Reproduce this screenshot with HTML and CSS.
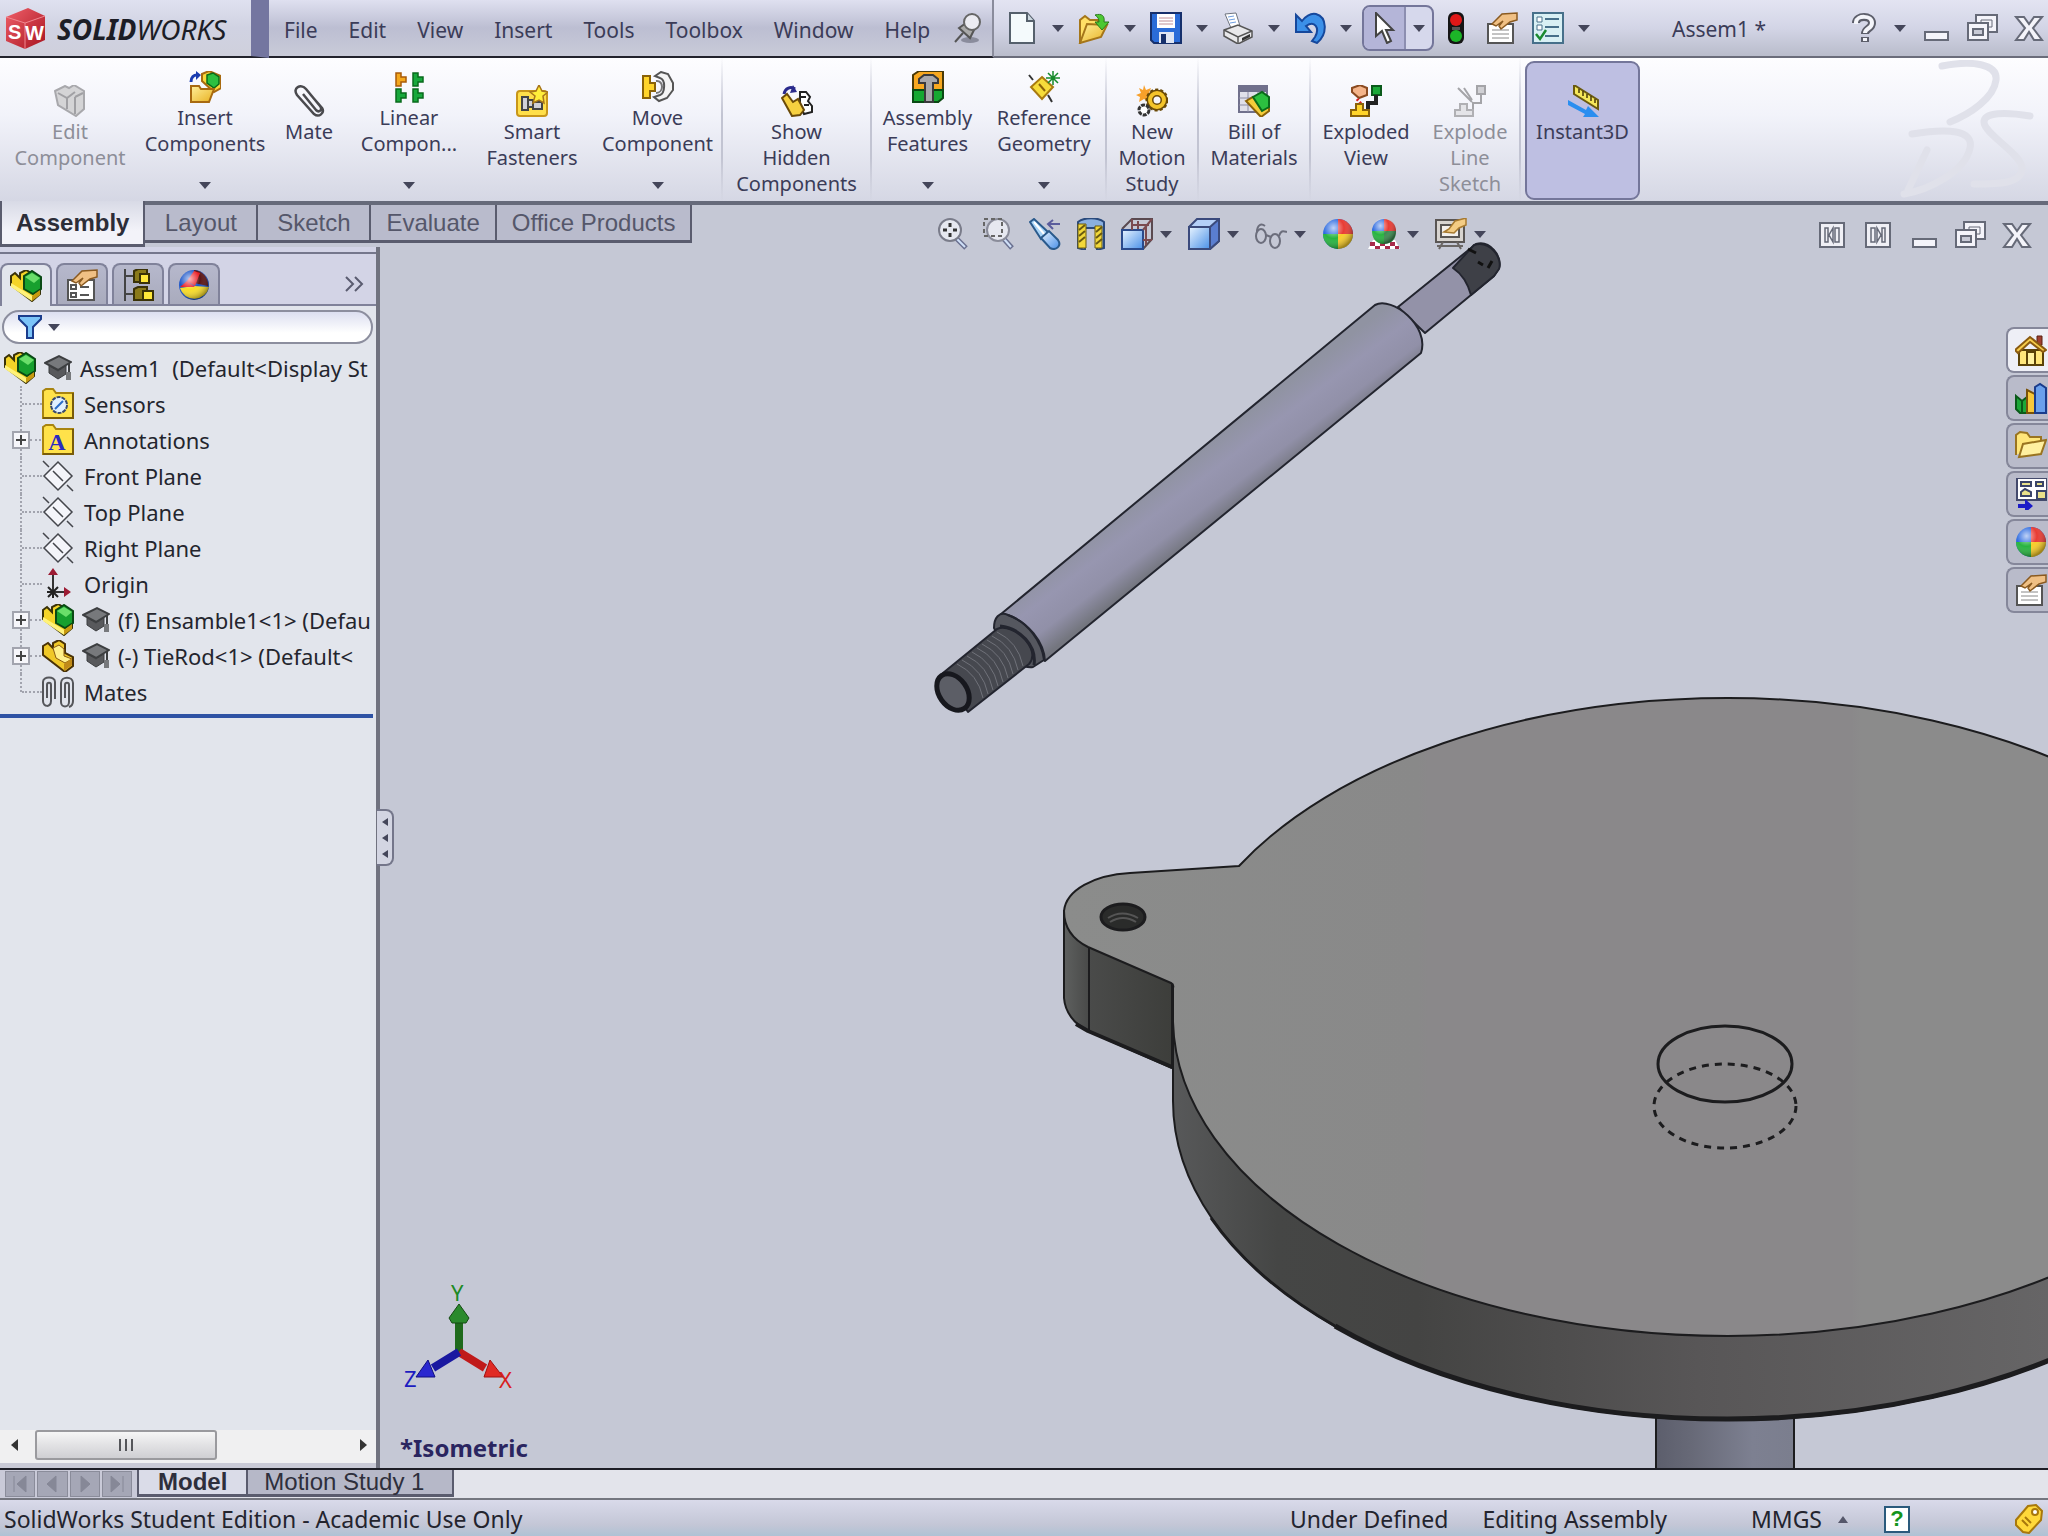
FILE: index.html
```html
<!DOCTYPE html>
<html lang="en">
<head>
  <meta charset="UTF-8" />
  <meta name="viewport" content="width=device-width, initial-scale=1.0" />
  <title>SolidWorks - Assem1</title>
  <link rel="stylesheet" href="styles.css">
</head>
<body>
  <!-- icon set, 32x32 grid -->
  <svg class="sprite" aria-hidden="true">
    <defs>
      <linearGradient id="g-blue" x1="0" y1="0" x2="1" y2="1"><stop offset="0" stop-color="#e8f4ff"/><stop offset="1" stop-color="#4a90e8"/></linearGradient>
      <linearGradient id="g-yellow" x1="0" y1="0" x2="1" y2="1"><stop offset="0" stop-color="#fff09a"/><stop offset="1" stop-color="#e8b020"/></linearGradient>
      <linearGradient id="g-red" x1="0" y1="0" x2="1" y2="1"><stop offset="0" stop-color="#f0606a"/><stop offset="1" stop-color="#a81420"/></linearGradient>
      <radialGradient id="g-shine" cx=".35" cy=".3" r=".7"><stop offset="0" stop-color="#fff" stop-opacity=".7"/><stop offset=".5" stop-color="#fff" stop-opacity="0"/><stop offset="1" stop-color="#000" stop-opacity=".35"/></radialGradient>

      <symbol id="i-caret" viewBox="0 0 12 8"><path d="M0 1h12L6 8z" fill="#44465a"/></symbol>
      <symbol id="i-new" viewBox="0 0 32 32"><path d="M4 1h17l7 8v22H4z" fill="#f4fafc" stroke="#55606c" stroke-width="2"/><path d="M21 1v8h7" fill="#ccd8e0" stroke="#55606c" stroke-width="2"/></symbol>
      <symbol id="i-open" viewBox="0 0 32 32"><path d="M2 31V8l5-4 5 4h8v6z" fill="#ffe066" stroke="#a5761a" stroke-width="2"/><path d="M2 31L9 12l20 1-6 12z" fill="url(#g-yellow)" stroke="#a5761a" stroke-width="2"/><path d="M17 3c7-2 10 1 9 7h5l-7 8-7-8h4c0-3-1-5-4-7z" fill="#4cc832" stroke="#2a7a1c"/></symbol>
      <symbol id="i-save" viewBox="0 0 32 32"><path d="M1 1h30v30H4l-3-3z" fill="#2a6cd8" stroke="#16306c" stroke-width="2"/><path d="M7 2h18v14H7z" fill="#fff"/><path d="M9 6h14M9 9h14M9 12h14" stroke="#c09098" stroke-width="1"/><path d="M9 20h15v11H9z" fill="#dfe6f4"/><path d="M11 22h5v9h-5z" fill="#16306c"/></symbol>
      <symbol id="i-print" viewBox="0 0 32 32"><path d="M3 2l11-1 4 13-9 2z" fill="#fff" stroke="#6e7480"/><path d="M6 5l6-1M7 8l6-1M8 11l6-1" stroke="#6f9fe0"/><path d="M2 18l14-5 14 6v6l-14 7-14-8z" fill="#e8e8ea" stroke="#555" stroke-width="1.500"/><path d="M2 18l14 7 14-6M16 25v7" fill="none" stroke="#555" stroke-width="1.500"/><path d="M20 26l8-4v3l-8 4z" fill="#333"/></symbol>
      <symbol id="i-undo" viewBox="0 0 32 32"><path d="M2 3v17h15l-5-6c9-6 14 2 9 11l-3 4 5 2C34 22 33 5 22 2c-5-1-10 2-14 7z" fill="#3c90e8" stroke="#16489c" stroke-width="2"/></symbol>
      <symbol id="i-arrow" viewBox="0 0 32 32"><path d="M8 1v23l6-5 5 12 4-2-5-11h7z" fill="#fff" stroke="#444" stroke-width="2"/></symbol>
      <symbol id="i-traffic" viewBox="0 0 32 32"><rect x="8" y="0" width="16" height="32" rx="6" fill="#151515"/><circle cx="16" cy="8" r="6" fill="#e01818"/><path d="M12 15h8v3h-8z" fill="#555"/><circle cx="16" cy="24" r="6" fill="#1cb428"/></symbol>
      <symbol id="i-props" viewBox="0 0 32 32"><path d="M2 12h25v19H2z" fill="#fff" stroke="#555" stroke-width="2"/><path d="M6 18h17M6 22h17M6 26h17" stroke="#888"/><path d="M6 12L16 2l15-1v7l-7 2-9 7-2-3 4-5-7 5z" fill="#f0c084" stroke="#8a5a20" stroke-width="1.500"/></symbol>
      <symbol id="i-proptree" viewBox="0 0 32 32"><path d="M2 11h26v20H2z" fill="#fff" stroke="#555" stroke-width="2"/><path d="M5 16h5v4H5zM5 24h5v4H5z" fill="none" stroke="#555" stroke-width="2"/><path d="M14 18h9M14 26h9" stroke="#555" stroke-width="2"/><path d="M6 12L16 2l15-1v7l-7 2-9 7-2-3 4-5-7 5z" fill="#f0c084" stroke="#8a5a20" stroke-width="1.500"/></symbol>
      <symbol id="i-options" viewBox="0 0 32 32"><rect x="1" y="1" width="30" height="30" fill="#d8f0f4" stroke="#46708a" stroke-width="2"/><path d="M5 5h5v5H5zM5 13h5v5H5z" fill="#fff" stroke="#46708a"/><path d="M13 7h14M13 15h14M13 24h14" stroke="#46708a" stroke-width="2"/><path d="M4 22l4 5 6-9" fill="none" stroke="#1a8a30" stroke-width="2.500"/></symbol>
      <symbol id="i-help" viewBox="0 0 32 32"><path d="M8 11C8 3 24 3 24 11c0 6-7 5-7 11M17 25v5" fill="none" stroke="#5c5e6a" stroke-width="8"/><path d="M8 12v-2C9 3 24 3 24 11c0 6-7 5-7 10M17 26v3" fill="none" stroke="#f4f5fa" stroke-width="4"/></symbol>
      <symbol id="i-min" viewBox="0 0 32 32"><rect x="5" y="20" width="23" height="8" fill="#f4f4fa" stroke="#666a78" stroke-width="2"/></symbol>
      <symbol id="i-restore" viewBox="0 0 32 32"><path d="M10 3h21v17H10z" fill="#f4f4fa" stroke="#666a78" stroke-width="2"/><path d="M15 8h11v7H15z" fill="none" stroke="#666a78"/><path d="M2 11h20v17H2z" fill="#f4f4fa" stroke="#666a78" stroke-width="2"/><path d="M7 17h10v6H7z" fill="#c8cad6" stroke="#666a78" stroke-width="2"/></symbol>
      <symbol id="i-close" viewBox="0 0 32 32"><path d="M4 5h8l5 7 5-7h8l-9 11 9 12h-8l-5-8-5 8H4l9-12z" fill="#f4f4fa" stroke="#666a78" stroke-width="2"/></symbol>
      <symbol id="i-pin" viewBox="0 0 32 32"><ellipse cx="18" cy="28" rx="9" ry="3" fill="#8a8c9c"/><path d="M3 30l8-9" stroke="#555" stroke-width="2"/><path d="M7 16l11 10 4-8-8-7z" fill="#aaa" stroke="#555" stroke-width="2"/><circle cx="20" cy="10" r="8" fill="#ececf2" stroke="#666" stroke-width="2"/></symbol>

      <symbol id="i-asm" viewBox="0 0 32 32"><path d="M1 6l4-3 5 5V3l6-3 14 8v16l-8 7L1 15z" fill="#f4d428" stroke="#3a3208" stroke-width="2"/><path d="M14 6l8-5 9 6v12l-8 5-9-5z" fill="#17a02e" stroke="#0a4a14" stroke-width="2"/><path d="M15 7l7-4 8 5-6 5z" fill="#6ade6a"/><path d="M1 13l21 13v5L1 17z" fill="#fff27a"/><path d="M22 26l8-6v5l-8 6z" fill="#c89a10"/></symbol>
      <symbol id="i-part" viewBox="0 0 32 32"><path d="M1 6l5-3 5 5V3l6-3 6 4v9l8 4v9l-8 6L1 15z" fill="#f0c828" stroke="#4a3206" stroke-width="2"/><path d="M11 8l6-3 5 4v7l8 3-7 4-9-5z" fill="#fff08a" stroke="#8a5a10"/><path d="M22 24l8-6v7l-8 6z" fill="#c08a18"/></symbol>
      <symbol id="i-grey-asm" viewBox="0 0 32 32"><path d="M1 6l10-5 4 2 5-3 10 6v18l-8 7L4 20z" fill="#d4d4d6" stroke="#a8a8ac" stroke-width="2"/><path d="M4 8l9 5 8-6M13 13v11M21 12l8-4M21 12v17" fill="none" stroke="#a0a0a4" stroke-width="2"/></symbol>
      <symbol id="i-insert" viewBox="0 0 32 32"><path d="M2 11C2 6 5 4 8 4" fill="none" stroke="#1a3cb0" stroke-width="3"/><path d="M7 0l5 4-5 5z" fill="#1a3cb0"/><path d="M13 3l7-3 12 5v12l-7 4-12-11z" fill="#f8d83a" stroke="#a86a10" stroke-width="2"/><path d="M18 4l6-2 6 4v7l-5 4-7-5z" fill="#2cc040" stroke="#0a6a1a" stroke-width="1.500"/><path d="M2 31V15h8l2 3h13l-5 13z" fill="url(#g-yellow)" stroke="#a86a10" stroke-width="2"/></symbol>
      <symbol id="i-clip" viewBox="0 0 32 32"><path d="M10 9l13 16c3 3 7 0 4-4L13 4C8-2-1 3 4 10l17 19c5 4 11-1 8-6L17 9" fill="none" stroke="#4a4a4e" stroke-width="2.500"/></symbol>
      <symbol id="i-linear" viewBox="0 0 32 32"><path d="M3 2h5v4h5v5H8v4H3z" fill="#f4a81c" stroke="#a85a08" stroke-width="1.500"/><path d="M20 2h5v4h5v5h-5v4h-5zM20 18h5v4h5v5h-5v4h-5zM3 18h5v4h5v5H8v4H3z" fill="#18a83c" stroke="#086a1c" stroke-width="1.500"/></symbol>
      <symbol id="i-smart" viewBox="0 0 32 32"><rect x="1" y="6" width="30" height="25" rx="3" fill="#ffdf4a" stroke="#c8961a" stroke-width="2"/><path d="M6 12h6v13H6zM12 15h5v7h-5zM17 17h9v7h-9z" fill="#d0d0d8" stroke="#444" stroke-width="2"/><path d="M23 0l3 6 6 1-5 4 1 7-5-3-6 3 2-7-5-4 6-1z" fill="#ffee3a" stroke="#a8761a" stroke-width="1.500"/></symbol>
      <symbol id="i-move" viewBox="0 0 32 32"><path d="M1 5h7v7h5v8H8v7H1z" fill="#ffd42a" stroke="#8a6208" stroke-width="2"/><path d="M13 5l6-4 7 2 5 9v7l-6 8-8 3-5-4 6-2c5-2 6-15 0-17z" fill="#f4f4f4" stroke="#555" stroke-width="2"/><path d="M14 10c8-1 8 12 0 12" fill="none" stroke="#777" stroke-width="2"/></symbol>
      <symbol id="i-show" viewBox="0 0 32 32"><path d="M3 9c1-6 7-8 11-5" fill="none" stroke="#2a2a8c" stroke-width="3"/><path d="M12 0l4 7-7 1z" fill="#2a2a8c"/><path d="M19 7h6l4 5-2 4 4 5v6l-8 2-4-8z" fill="#fff" stroke="#222" stroke-width="2"/><path d="M20 12h5M23 20h5" stroke="#222" stroke-width="2"/><path d="M1 13l5-4 6 8 5-3 6 11-4 5-8 1z" fill="#f6d040" stroke="#6a4a08" stroke-width="2"/></symbol>
      <symbol id="i-feat" viewBox="0 0 32 32"><path d="M1 4l6-4h24v26l-5 5H1z" fill="#f8a820" stroke="#4a3a08" stroke-width="2"/><path d="M1 19h30v8l-5 4H1z" fill="#16a832" stroke="#0a4a14" stroke-width="2"/><path d="M7 8l5-4h9l5 4v4h-5v19h-8V12H7z" fill="#a8a8ac" stroke="#3a3a3c" stroke-width="2"/></symbol>
      <symbol id="i-ref" viewBox="0 0 32 32"><path d="M1 4l4 5M20 24l4 7" stroke="#333" stroke-width="2"/><path d="M14 6l11 10-11 12L3 16z" fill="#f6dc3a" stroke="#a87a10" stroke-width="2"/><path d="M11 13l6 7" stroke="#8a6208" stroke-width="2"/><path d="M25 0v14M18 7h14M20 2l10 10M30 2L20 12" stroke="#158a2a" stroke-width="1.500"/></symbol>
      <symbol id="i-motion" viewBox="0 0 32 32"><path d="M8 0l2 5 5-2-2 5 4 2-5 2 1 5-5-3-5 3 1-5-4-2 5-2-2-5 4 2z" fill="#f8a02a"/><circle cx="21" cy="15" r="10" fill="none" stroke="#6a4a08" stroke-width="3" stroke-dasharray="3 2"/><circle cx="21" cy="15" r="7" fill="none" stroke="#6a4a08" stroke-width="7"/><circle cx="21" cy="15" r="7" fill="none" stroke="#f4c42a" stroke-width="4"/><circle cx="8" cy="25" r="5" fill="#fff" stroke="#333" stroke-width="3" stroke-dasharray="4 1"/></symbol>
      <symbol id="i-bom" viewBox="0 0 32 32"><path d="M1 1h28v26H1z" fill="#e0e0ea" stroke="#70708c" stroke-width="2"/><path d="M1 1h28v6H1z" fill="#70708c"/><path d="M1 13h28M1 20h28M10 7v20M20 7v20" stroke="#8c8ca4"/><path d="M8 16l7-4 16 8v6l-8 6z" fill="#f4cc3a" stroke="#8a6208" stroke-width="2"/><path d="M15 12l9-5 7 5v10l-7 4z" fill="#2cc040" stroke="#0a6a1a" stroke-width="2"/></symbol>
      <symbol id="i-exploded" viewBox="0 0 32 32"><path d="M2 3l8-3 7 3v7l-8 3-7-6z" fill="#f4b48a" stroke="#8a4a20" stroke-width="2"/><path d="M22 1h9v9h-9z" fill="#1ca838" stroke="#0a5a1a" stroke-width="2"/><path d="M26 10v8h-8v6" fill="none" stroke="#222" stroke-width="4"/><path d="M7 14l5 6" stroke="#d82020" stroke-width="3" stroke-dasharray="2 2"/><path d="M6 19h7v6h6v6H1v-6h5z" fill="#ffd42a" stroke="#8a6208" stroke-width="2"/></symbol>
      <symbol id="i-exploded-grey" viewBox="0 0 32 32"><path d="M23 1h8v8h-8z" fill="#d0d0d4" stroke="#a4a4a8" stroke-width="2"/><path d="M27 9v9h-8v6M4 3l14 14M10 3l8 12" fill="none" stroke="#a4a4a8" stroke-width="2"/><path d="M6 19h7v6h6v6H1v-6h5z" fill="#e4e4e8" stroke="#b0b0b4" stroke-width="2"/></symbol>
      <symbol id="i-instant" viewBox="0 0 32 32"><path d="M7 0l24 15v9L7 9z" fill="#f6e85a" stroke="#6a5a10" stroke-width="2"/><path d="M12 4v4M16 6v5M20 9v4M24 11v5M28 14v4" stroke="#4a3a08" stroke-width="1.500"/><path d="M1 15l18 10 2-4 11 11-16 0 2-3L1 20z" fill="#2a8ef0"/></symbol>

      <symbol id="i-zoomfit" viewBox="0 0 32 32"><path d="M19 20l10 10" stroke="#6a7090" stroke-width="5"/><path d="M20 21l8 8" stroke="#cfe0f8" stroke-width="2"/><circle cx="13" cy="12" r="11" fill="#e6e8f0" stroke="#7a7c8a" stroke-width="2"/><path d="M13 5v4M13 15v4M6 12h4M16 12h4" stroke="#333" stroke-width="3"/></symbol>
      <symbol id="i-zoomarea" viewBox="0 0 32 32"><path d="M20 20l9 10" stroke="#6a7090" stroke-width="5"/><path d="M21 21l7 8" stroke="#cfe0f8" stroke-width="2"/><circle cx="15" cy="12" r="11" fill="#e6e8f0" stroke="#8a8c9a" stroke-width="2"/><path d="M1 1h18v17H1z" fill="none" stroke="#666" stroke-width="2" stroke-dasharray="4 3"/></symbol>
      <symbol id="i-prev" viewBox="0 0 32 32"><path d="M1 4l4-3 14 13-7 7z" fill="#a8d4f8" stroke="#2a5a8c" stroke-width="2"/><path d="M5 4l11 13" stroke="#fff" stroke-width="2"/><path d="M12 20l8-7 9 9c4 6-2 11-8 8z" fill="url(#g-blue)" stroke="#2a5a8c" stroke-width="2"/><path d="M31 6H20M24 2l-5 4 5 5" fill="none" stroke="#5a5c9c" stroke-width="2"/></symbol>
      <symbol id="i-section" viewBox="0 0 32 32"><path d="M3 4c6-5 20-5 26 0v26l-7 2V10H10v22l-7-2z" fill="#8ab0e0" stroke="#2a4a7c" stroke-width="2"/><path d="M3 6h8v24H3zM20 8h7v22h-7z" fill="#f2d83a" stroke="#6a5a10"/><path d="M4 12l6-5M4 18l6-5M4 24l6-5M21 14l6-5M21 20l6-5M21 26l6-5" stroke="#6a5a10" stroke-width="2"/></symbol>
      <symbol id="i-orient" viewBox="0 0 32 32"><path d="M1 11L11 1h20v20l-9 10" fill="none" stroke="#5a4a50" stroke-width="2"/><path d="M1 12h21v19H1z" fill="url(#g-blue)" stroke="#2a4a8c" stroke-width="2"/><path d="M22 12l9-11M11 1v11M22 22h9M17 3v8M25 9v18M12 7h16" stroke="#7a4a50" stroke-width="2"/></symbol>
      <symbol id="i-cube" viewBox="0 0 32 32"><path d="M1 9l8-8h22v22l-9 8H1z" fill="#b4d0f8" stroke="#3a4a7c" stroke-width="2"/><path d="M22 9l9-8v22l-9 8z" fill="#5a7ed0" stroke="#3a4a7c" stroke-width="2"/><path d="M1 9h21v22H1z" fill="url(#g-blue)" stroke="#3a4a7c" stroke-width="2"/></symbol>
      <symbol id="i-glasses" viewBox="0 0 32 32"><g fill="none" stroke="#6c6e7c" stroke-width="2"><ellipse cx="6" cy="18" rx="5" ry="7"/><ellipse cx="20" cy="23" rx="5" ry="7"/><path d="M2 14C2 7 6 5 10 8M11 17l5 2M24 18c2-6 4-5 8-4"/></g></symbol>
      <symbol id="i-sphere" viewBox="0 0 32 32"><circle cx="16" cy="16" r="15" fill="#2c6ae0"/><path d="M16 16V1a15 15 0 0 1 15 15z" fill="#e83c34"/><path d="M16 16h15a15 15 0 0 1-15 15z" fill="#f8cc28"/><path d="M16 16v15A15 15 0 0 1 1 16z" fill="#28b440"/><circle cx="16" cy="16" r="15" fill="url(#g-shine)"/></symbol>
      <symbol id="i-sphere2" viewBox="0 0 32 32"><circle cx="16" cy="16" r="15" fill="#1a54c8"/><path d="M16 14L16 1a15 15 0 0 1 14 16z" fill="#5a1414"/><path d="M16 2l6 2-5 13-8-5z" fill="#e81c24"/><path d="M2 19l14-2 15 1a15 15 0 0 1-29 1z" fill="#f8dc28"/><path d="M2 18l7-6 8 6z" fill="#e81c24"/><circle cx="16" cy="16" r="15" fill="url(#g-shine)"/></symbol>
      <symbol id="i-scene" viewBox="0 0 32 32"><path d="M0 31l5-9h22l5 9z" fill="#fff"/><path d="M2 24h5v4H2zM12 24h5v4h-5zM22 24h5v4h-5zM7 28h5v3H7zM17 28h5v3h-5zM27 28h4v3h-4z" fill="#a82a4a"/><path d="M16 13V1a12 12 0 0 1 12 12z" fill="#e83c34"/><path d="M16 13V1A12 12 0 0 0 4 13z" fill="#2c6ae0"/><path d="M4 13h12v13C8 26 4 20 4 13z" fill="#28b440"/><path d="M16 13h12c0 8-4 13-12 13z" fill="#3c8c50"/><ellipse cx="16" cy="13" rx="12" ry="13" fill="url(#g-shine)"/></symbol>
      <symbol id="i-monitor" viewBox="0 0 32 32"><path d="M1 2h28v22H1z" fill="#d8d4d0" stroke="#5a5654" stroke-width="2"/><path d="M6 7h18v12H6z" fill="#f4f0ec" stroke="#5a5654" stroke-width="2"/><path d="M8 24l-4 7M22 24l4 7M2 28h26" stroke="#6a6664" stroke-width="2"/><path d="M9 14l5-3 6-8 11-3v7l-7 3-5 5z" fill="#f4cc84" stroke="#a87a30" stroke-width="1.500"/></symbol>
      <symbol id="i-paneL" viewBox="0 0 32 32"><rect x="4" y="4" width="24" height="24" fill="#f0f0f6" stroke="#666a78" stroke-width="2"/><path d="M9 9h3v14H9zM19 9h4v14h-4zM17 9v14l-4-7z" fill="#f0f0f6" stroke="#666a78" stroke-width="1.500"/></symbol>
      <symbol id="i-paneR" viewBox="0 0 32 32"><rect x="4" y="4" width="24" height="24" fill="#f0f0f6" stroke="#666a78" stroke-width="2"/><path d="M9 9h4v14H9zM20 9h3v14h-3zM15 9v14l4-7z" fill="#f0f0f6" stroke="#666a78" stroke-width="1.500"/></symbol>

      <symbol id="i-config" viewBox="0 0 32 32"><path d="M3 0v32M3 7h12M3 25h12" stroke="#444" stroke-width="2"/><path d="M12 2l4-2h9v10l-4 3h-9zM12 20l4-2h9v10l-4 3h-9z" fill="#8a7a1a" stroke="#3a3208" stroke-width="2"/><path d="M18 5h9v9h-9zM21 22h10v9H21z" fill="#ffe83a" stroke="#3a3208" stroke-width="2"/></symbol>
      <symbol id="i-cap" viewBox="0 0 28 28"><path d="M1 9L15 2l12 6-13 8z" fill="#77797c" stroke="#3c3e40" stroke-width="2"/><path d="M5 12v7l9 6 8-5v-8l-8 5z" fill="#58595c" stroke="#3c3e40"/><path d="M25 9v14" stroke="#3c3e40" stroke-width="2"/><path d="M22 18h5v8h-5z" fill="#77797c"/></symbol>
      <symbol id="i-sensor" viewBox="0 0 32 32"><path d="M1 30V3l3-2h7l3 4h17v25z" fill="#ffe24a" stroke="#a88410" stroke-width="2"/><path d="M1 30h30V5" fill="none" stroke="#7a5c08" stroke-width="2"/><circle cx="17" cy="17" r="8" fill="#e0f0ff" stroke="#3a4a6c" stroke-width="2" stroke-dasharray="4 1"/><path d="M13 21l8-8" stroke="#2a6cc8" stroke-width="2"/></symbol>
      <symbol id="i-annot" viewBox="0 0 32 32"><path d="M1 30V3l3-2h7l3 4h17v25z" fill="#ffe24a" stroke="#a88410" stroke-width="2"/><path d="M1 30h30V5" fill="none" stroke="#7a5c08" stroke-width="2"/><text x="15" y="26" class="glyph-a">A</text></symbol>
      <symbol id="i-plane" viewBox="0 0 32 32"><path d="M16 2l14 14-14 14L2 16z" fill="#f4f5fa" stroke="#44464c" stroke-width="1.500"/><path d="M1 1l6 6M11 11l10 10M25 25l6 6" stroke="#44464c" stroke-width="1.500"/></symbol>
      <symbol id="i-origin" viewBox="0 0 32 32"><path d="M11 7v17h14" fill="none" stroke="#333" stroke-width="2"/><path d="M11 0l5 7H6zM29 24l-7-5v10z" fill="#9c1c34"/><path d="M6 19l10 10M16 19L6 29M5 24h6M11 24v6" stroke="#222" stroke-width="2"/></symbol>
      <symbol id="i-mates" viewBox="0 0 32 32"><g fill="none" stroke="#55565a" stroke-width="2"><path d="M5 22V9c0-3 4-3 4 0v16c0 7-8 6-8 0V6c0-6 12-6 12 0v17"/><path d="M23 22V9c0-3 4-3 4 0v17c0 6-8 6-8 0V7c0-7 12-7 12 0v18c0 3-1 5-4 6"/></g></symbol>
      <symbol id="i-filter" viewBox="0 0 24 24"><path d="M1 1h22v3l-8 8v11H9V12L1 4z" fill="#7cc4f8" stroke="#1a3c8c" stroke-width="2"/></symbol>
      <symbol id="i-home" viewBox="0 0 32 32"><path d="M22 2h5v9h-5z" fill="#a04030" stroke="#5a2010"/><path d="M4 16h24v15H4z" fill="#ffe67a" stroke="#5a4208" stroke-width="2"/><path d="M0 16L15 3l16 13-3 2L15 8 3 19z" fill="#f6cc4a" stroke="#8a5a10" stroke-width="2"/><path d="M12 18h8v13h-8z" fill="#fff2a0" stroke="#5a4208" stroke-width="2"/></symbol>
      <symbol id="i-library" viewBox="0 0 32 32"><path d="M1 14l6 5 5-4v16H5l-4-4z" fill="#1ca838" stroke="#0a5a1a" stroke-width="2"/><path d="M7 19v12M1 14v9" stroke="#0a5a1a" stroke-width="2"/><path d="M12 8l8 4v19h-8z" fill="#f8c83a" stroke="#7a5208" stroke-width="2"/><path d="M20 5l5-3 6 4v25H20z" fill="#6aa0ec" stroke="#1a3c8c" stroke-width="2"/></symbol>
      <symbol id="i-folder" viewBox="0 0 32 32"><path d="M1 25V5l4-3 7 1 3 4h11v6" fill="#ffe67a" stroke="#9a7420" stroke-width="2"/><path d="M4 27L8 14l23-4-5 14z" fill="#fff0a0" stroke="#9a7420" stroke-width="2"/></symbol>
      <symbol id="i-palette" viewBox="0 0 32 32"><path d="M2 0h30v22H2z" fill="#fff" stroke="#444a6c" stroke-width="2"/><path d="M6 4h10v4H6zM21 4h7v4h-7zM6 14l4-3 6 3v4H6zM22 13h9v8h-9z" fill="#e8e08a" stroke="#3a4468" stroke-width="2"/><path d="M3 26h7v-5l8 7-8 7v-5H3z" fill="#1a1ac8"/></symbol>
    </defs>
  </svg>

  <div class="app">
    <header class="titlebar">
      <div class="brand">
        <svg class="brand-cube" viewBox="0 0 42 42"><path d="M1 9L23 0l17 8v24L20 41 1 33z" fill="url(#g-red)"/><path d="M1 9l19 6 20-7M20 15v26" stroke="#f08890" fill="none"/><text x="3" y="31" class="cube-letter">S</text><text x="20" y="32" class="cube-letter">W</text></svg>
        <span class="brand-name"><b>SOLID</b>WORKS</span>
      </div>
      <nav class="menubar">
        <button>File</button>
        <button>Edit</button>
        <button>View</button>
        <button>Insert</button>
        <button>Tools</button>
        <button>Toolbox</button>
        <button>Window</button>
        <button>Help</button>
        <button class="pin" aria-label="Pin menu"><svg class="ico"><use href="#i-pin"/></svg></button>
      </nav>
      <div class="quickbar">
        <button aria-label="New"><svg class="ico"><use href="#i-new"/></svg></button>
        <button aria-label="New options"><svg class="caret"><use href="#i-caret"/></svg></button>
        <button aria-label="Open"><svg class="ico"><use href="#i-open"/></svg></button>
        <button aria-label="Open options"><svg class="caret"><use href="#i-caret"/></svg></button>
        <button aria-label="Save"><svg class="ico"><use href="#i-save"/></svg></button>
        <button aria-label="Save options"><svg class="caret"><use href="#i-caret"/></svg></button>
        <button aria-label="Print"><svg class="ico"><use href="#i-print"/></svg></button>
        <button aria-label="Print options"><svg class="caret"><use href="#i-caret"/></svg></button>
        <button aria-label="Undo"><svg class="ico"><use href="#i-undo"/></svg></button>
        <button aria-label="Undo options"><svg class="caret"><use href="#i-caret"/></svg></button>
        <div class="select-tool">
          <button class="select-main" aria-label="Select"><svg class="ico"><use href="#i-arrow"/></svg></button>
          <button class="select-more" aria-label="Select options"><svg class="caret"><use href="#i-caret"/></svg></button>
        </div>
        <button aria-label="Rebuild"><svg class="ico"><use href="#i-traffic"/></svg></button>
        <button aria-label="File properties"><svg class="ico"><use href="#i-props"/></svg></button>
        <button aria-label="Options"><svg class="ico"><use href="#i-options"/></svg></button>
        <button aria-label="More options"><svg class="caret"><use href="#i-caret"/></svg></button>
      </div>
      <div class="doc-title">Assem1 *</div>
      <div class="win-controls">
        <button aria-label="Help"><svg class="ico"><use href="#i-help"/></svg></button>
        <button aria-label="Help options"><svg class="caret"><use href="#i-caret"/></svg></button>
        <button aria-label="Minimize"><svg class="ico"><use href="#i-min"/></svg></button>
        <button aria-label="Restore"><svg class="ico"><use href="#i-restore"/></svg></button>
        <button aria-label="Close"><svg class="ico"><use href="#i-close"/></svg></button>
      </div>
    </header>

    <section class="ribbon">
      <button class="cmd off" disabled><svg class="ico"><use href="#i-grey-asm"/></svg><span>Edit<br>Component</span></button>
      <button class="cmd drop"><svg class="ico"><use href="#i-insert"/></svg><span>Insert<br>Components</span><svg class="caret"><use href="#i-caret"/></svg></button>
      <button class="cmd"><svg class="ico"><use href="#i-clip"/></svg><span>Mate</span></button>
      <button class="cmd drop"><svg class="ico"><use href="#i-linear"/></svg><span>Linear<br>Compon...</span><svg class="caret"><use href="#i-caret"/></svg></button>
      <button class="cmd"><svg class="ico"><use href="#i-smart"/></svg><span>Smart<br>Fasteners</span></button>
      <button class="cmd drop"><svg class="ico"><use href="#i-move"/></svg><span>Move<br>Component</span><svg class="caret"><use href="#i-caret"/></svg></button>
      <button class="cmd sep"><svg class="ico"><use href="#i-show"/></svg><span>Show<br>Hidden<br>Components</span></button>
      <button class="cmd drop sep"><svg class="ico"><use href="#i-feat"/></svg><span>Assembly<br>Features</span><svg class="caret"><use href="#i-caret"/></svg></button>
      <button class="cmd drop"><svg class="ico"><use href="#i-ref"/></svg><span>Reference<br>Geometry</span><svg class="caret"><use href="#i-caret"/></svg></button>
      <button class="cmd sep"><svg class="ico"><use href="#i-motion"/></svg><span>New<br>Motion<br>Study</span></button>
      <button class="cmd sep"><svg class="ico"><use href="#i-bom"/></svg><span>Bill of<br>Materials</span></button>
      <button class="cmd sep"><svg class="ico"><use href="#i-exploded"/></svg><span>Exploded<br>View</span></button>
      <button class="cmd off" disabled><svg class="ico"><use href="#i-exploded-grey"/></svg><span>Explode<br>Line<br>Sketch</span></button>
      <div class="sep active-wrap">
        <button class="cmd active"><svg class="ico"><use href="#i-instant"/></svg><span>Instant3D</span></button>
      </div>
      <svg class="ds-mark" viewBox="0 0 140 140"><g fill="none" stroke="#e0e1ea" stroke-width="7" stroke-linecap="round"><path d="M42 6c30-6 56-2 54 14-2 18-26 34-46 42"/><path d="M12 74c36-6 62-4 58 14-5 24-42 42-66 46M27 90L8 130"/><path d="M130 56c-24-4-46-4-46 6 0 12 38 32 38 46 0 16-24 16-48 16"/></g></svg>
    </section>

    <div class="workspace">
      <div class="subbar">
        <div class="cmd-tabs">
          <button class="cmd-tab current">Assembly</button>
          <button class="cmd-tab">Layout</button>
          <button class="cmd-tab">Sketch</button>
          <button class="cmd-tab">Evaluate</button>
          <button class="cmd-tab">Office Products</button>
        </div>
        <div class="hud">
          <button aria-label="Zoom to fit"><svg class="ico"><use href="#i-zoomfit"/></svg></button>
          <button aria-label="Zoom to area"><svg class="ico"><use href="#i-zoomarea"/></svg></button>
          <button aria-label="Previous view"><svg class="ico"><use href="#i-prev"/></svg></button>
          <button aria-label="Section view"><svg class="ico"><use href="#i-section"/></svg></button>
          <button aria-label="View orientation"><svg class="ico"><use href="#i-orient"/></svg></button>
          <button class="more" aria-label="Orientation options"><svg class="caret"><use href="#i-caret"/></svg></button>
          <button aria-label="Display style"><svg class="ico"><use href="#i-cube"/></svg></button>
          <button class="more" aria-label="Display options"><svg class="caret"><use href="#i-caret"/></svg></button>
          <button aria-label="Hide/show items"><svg class="ico"><use href="#i-glasses"/></svg></button>
          <button class="more" aria-label="Hide/show options"><svg class="caret"><use href="#i-caret"/></svg></button>
          <button aria-label="Edit appearance"><svg class="ico"><use href="#i-sphere"/></svg></button>
          <button aria-label="Apply scene"><svg class="ico"><use href="#i-scene"/></svg></button>
          <button class="more" aria-label="Scene options"><svg class="caret"><use href="#i-caret"/></svg></button>
          <button aria-label="View settings"><svg class="ico"><use href="#i-monitor"/></svg></button>
          <button class="more" aria-label="View settings options"><svg class="caret"><use href="#i-caret"/></svg></button>
        </div>
        <div class="doc-controls">
          <button aria-label="Collapse left"><svg class="ico"><use href="#i-paneL"/></svg></button>
          <button aria-label="Collapse right"><svg class="ico"><use href="#i-paneR"/></svg></button>
          <button aria-label="Minimize document"><svg class="ico"><use href="#i-min"/></svg></button>
          <button aria-label="Restore document"><svg class="ico"><use href="#i-restore"/></svg></button>
          <button aria-label="Close document"><svg class="ico"><use href="#i-close"/></svg></button>
        </div>
      </div>

      <div class="main">
        <aside class="sidebar">
          <div class="side-tabs">
            <button class="side-tab current" aria-label="Feature tree"><svg class="ico"><use href="#i-asm"/></svg></button>
            <button class="side-tab" aria-label="Properties"><svg class="ico"><use href="#i-proptree"/></svg></button>
            <button class="side-tab" aria-label="Configurations"><svg class="ico"><use href="#i-config"/></svg></button>
            <button class="side-tab" aria-label="Appearances"><svg class="ico"><use href="#i-sphere2"/></svg></button>
            <button class="side-more" aria-label="More tabs"><svg viewBox="0 0 20 16" width="20" height="16"><path d="M2 1l7 7-7 7M11 1l7 7-7 7" fill="none" stroke="#5a5c70" stroke-width="2"/></svg></button>
          </div>
          <label class="filter">
            <svg class="filter-ico"><use href="#i-filter"/></svg>
            <svg class="caret"><use href="#i-caret"/></svg>
            <input type="text" aria-label="Filter tree">
          </label>
          <div class="tree">
            <div class="row root"><svg class="ico"><use href="#i-asm"/></svg><svg class="cap"><use href="#i-cap"/></svg><span>Assem1&nbsp; (Default&lt;Display St</span></div>
            <ul class="nodes">
              <li class="row"><i class="twig"></i><svg class="ico"><use href="#i-sensor"/></svg><span>Sensors</span></li>
              <li class="row"><button class="plus" aria-label="Expand"></button><svg class="ico"><use href="#i-annot"/></svg><span>Annotations</span></li>
              <li class="row"><i class="twig"></i><svg class="ico"><use href="#i-plane"/></svg><span>Front Plane</span></li>
              <li class="row"><i class="twig"></i><svg class="ico"><use href="#i-plane"/></svg><span>Top Plane</span></li>
              <li class="row"><i class="twig"></i><svg class="ico"><use href="#i-plane"/></svg><span>Right Plane</span></li>
              <li class="row"><i class="twig"></i><svg class="ico"><use href="#i-origin"/></svg><span>Origin</span></li>
              <li class="row"><button class="plus" aria-label="Expand"></button><svg class="ico"><use href="#i-asm"/></svg><svg class="cap"><use href="#i-cap"/></svg><span>(f) Ensamble1&lt;1&gt; (Defau</span></li>
              <li class="row"><button class="plus" aria-label="Expand"></button><svg class="ico"><use href="#i-part"/></svg><svg class="cap"><use href="#i-cap"/></svg><span>(-) TieRod&lt;1&gt; (Default&lt;</span></li>
              <li class="row"><i class="twig"></i><svg class="ico"><use href="#i-mates"/></svg><span>Mates</span></li>
            </ul>
          </div>
          <div class="hscroll">
            <button aria-label="Scroll left"><svg viewBox="0 0 8 12" width="8" height="12"><path d="M8 0v12L1 6z" fill="#333"/></svg></button>
            <div class="track"><div class="thumb"><i></i><i></i><i></i></div></div>
            <button aria-label="Scroll right"><svg viewBox="0 0 8 12" width="8" height="12"><path d="M0 0v12l7-6z" fill="#333"/></svg></button>
          </div>
        </aside>

        <div class="viewport">
          <!-- model space: units are screen pixels at 1:1 zoom -->
          <svg class="scene" viewBox="380 247 1668 1221" preserveAspectRatio="xMinYMin slice">
            <defs>
              <linearGradient id="rod" gradientUnits="userSpaceOnUse" x1="1180" y1="465" x2="1222" y2="520"><stop offset="0" stop-color="#9093a2"/><stop offset=".35" stop-color="#9796b0"/><stop offset=".7" stop-color="#9190a8"/><stop offset="1" stop-color="#74767f"/></linearGradient>
              <linearGradient id="wall" gradientUnits="userSpaceOnUse" x1="1172" y1="0" x2="2048" y2="0"><stop offset="0" stop-color="#58595a"/><stop offset=".12" stop-color="#454645"/><stop offset=".28" stop-color="#444443"/><stop offset=".6" stop-color="#585657"/><stop offset="1" stop-color="#666566"/></linearGradient>
              <linearGradient id="earwall" gradientUnits="userSpaceOnUse" x1="1064" y1="0" x2="1172" y2="0"><stop offset="0" stop-color="#5e605f"/><stop offset=".22" stop-color="#4a4b4a"/><stop offset="1" stop-color="#3d3e3b"/></linearGradient>
              <linearGradient id="shaft" x1="0" x2="1" y1="0" y2="0"><stop offset="0" stop-color="#5c5e6c"/><stop offset=".25" stop-color="#676977"/><stop offset=".7" stop-color="#7d8091"/><stop offset="1" stop-color="#7b7e8e"/></linearGradient>
              <linearGradient id="face" gradientUnits="userSpaceOnUse" x1="1064" y1="0" x2="2048" y2="0"><stop offset="0" stop-color="#8b8c8b"/><stop offset=".36" stop-color="#898989"/><stop offset=".37" stop-color="#8a888a"/><stop offset=".8" stop-color="#8a888a"/><stop offset=".81" stop-color="#8b8b8b"/><stop offset="1" stop-color="#8b8b8b"/></linearGradient>
            </defs>

            <!-- tie rod -->
            <g stroke="#23252f" stroke-width="2" stroke-linejoin="round">
              <path d="M1398 307L1476 244C1490 240 1502 256 1499 268L1494 276L1425 333z" fill="#9392a8"/>
              <path d="M1453 268L1474 245C1490 240 1503 258 1499 269L1494 276L1471 295C1468 284 1462 274 1453 268z" fill="#3e4047"/>
              <path d="M1468 249l8 4M1478 262l5 3M1488 268l4-7" stroke="#111" stroke-width="3"/>
              <path d="M1001 614L1375 305C1392 296 1430 326 1421 353L1045 661z" fill="url(#rod)"/>
              <path d="M994 628C994 618 999 611 1008 615C1028 622 1042 642 1044 660L1033 667C1026 668 1019 665 1013 662z" fill="#55575f"/>
              <path d="M1008 615C1028 622 1044 642 1045 661" fill="none"/>
              <path d="M943 673L997 629C1014 622 1042 650 1029 664L968 712z" fill="#46484f"/>
              <path d="M1000 626C1020 628 1037 646 1034 665" fill="none" stroke-width="3"/>
              <g fill="none" stroke="#70727a" stroke-width="1">
                <path d="M957 664q21 10 26 34M962 660q21 10 26 34M967 656q21 10 26 34M972 652q21 10 26 34M977 648q21 10 26 34M982 644q21 10 26 34M987 640q21 10 26 34M992 636q21 10 26 34M997 632q21 10 26 34"/>
              </g>
              <ellipse cx="953" cy="692" rx="14" ry="20" transform="rotate(-35 953 692)" fill="#5c5e66" stroke="#17181e" stroke-width="5"/>
            </g>

            <!-- base plate -->
            <g stroke="#1c1c1e" stroke-width="2" stroke-linejoin="round">
              <rect x="1656" y="1400" width="138" height="68" fill="url(#shaft)" stroke="none"/>
              <path d="M1656 1400v68M1794 1400v68"/>
              <path d="M1064 911V998C1065 1012 1074 1024 1088 1031L1172 1068V980L1088 940z" fill="url(#earwall)"/>
              <path d="M1089 947V1030" fill="none"/>
              <path d="M1076 1024L1088 1031L1172 1067" fill="none" stroke-width="4"/>
              <path d="M1173 985V1101A555 319 0 0 0 1728 1420A555 319 0 0 0 2283 1101V1017z" fill="url(#wall)"/>
              <path d="M1211 1218A555 319 0 0 0 1335 1326" fill="none" stroke-width="3"/>
              <path d="M1335 1326A555 319 0 0 0 1728 1419A555 319 0 0 0 2283 1101" fill="none" stroke-width="5"/>
              <path d="M1239 866A555 319 0 0 1 1728 698A555 319 0 0 1 1728 1336A555 319 0 0 1 1173 1022L1173 988C1174 985 1173 984 1171 983L1088 947C1070 938 1064 926 1064 911C1066 890 1094 875 1130 873z" fill="url(#face)"/>
              <ellipse cx="1123" cy="917" rx="22" ry="13" fill="#2a2b2a" stroke-width="3"/>
              <path d="M1108 918q14-9 30 0M1110 922q13-8 26 0" fill="none" stroke="#555"/>
              <ellipse cx="1725" cy="1064" rx="67" ry="38" fill="none" stroke-width="3"/>
              <ellipse cx="1725" cy="1106" rx="71" ry="42" fill="none" stroke-width="3" stroke-dasharray="7 6"/>
            </g>

            <!-- orientation triad -->
            <path d="M459 1352V1318" stroke="#1f6a1c" stroke-width="8"/>
            <path d="M459 1304l10 14-3 5h-14l-3-5z" fill="#2a8a2c" stroke="#144a12"/>
            <path d="M459 1352l26 16" stroke="#c01a1a" stroke-width="8"/>
            <path d="M503 1377l-19 0 6-17z" fill="#e02a24" stroke="#a01010"/>
            <path d="M459 1352l-26 16" stroke="#1a18a0" stroke-width="8"/>
            <path d="M416 1377h19l-7-17z" fill="#2a28d0" stroke="#100e80"/>
            <text x="451" y="1301" class="axis y">Y</text>
            <text x="499" y="1388" class="axis x">X</text>
            <text x="404" y="1387" class="axis z">Z</text>
            <text x="400" y="1457" class="view-name">*Isometric</text>
          </svg>
          <button class="splitter-handle" aria-label="Collapse panel"><svg viewBox="0 0 8 44" width="8" height="44"><path d="M7 2v8L1 6zM7 18v8l-6-4zM7 34v8l-6-4z" fill="#44465a"/></svg></button>
          <div class="taskpane">
            <button class="current" aria-label="Resources"><svg class="ico"><use href="#i-home"/></svg></button>
            <button aria-label="Design library"><svg class="ico"><use href="#i-library"/></svg></button>
            <button aria-label="File explorer"><svg class="ico"><use href="#i-folder"/></svg></button>
            <button aria-label="View palette"><svg class="ico"><use href="#i-palette"/></svg></button>
            <button aria-label="Appearances"><svg class="ico"><use href="#i-sphere"/></svg></button>
            <button aria-label="Custom properties"><svg class="ico"><use href="#i-props"/></svg></button>
          </div>
        </div>
      </div>
    </div>

    <div class="study-bar">
      <div class="study-nav">
        <button aria-label="First"><svg viewBox="0 0 16 18"><path d="M2 1v16M14 1v16L5 9z"/></svg></button>
        <button aria-label="Previous"><svg viewBox="0 0 16 18"><path d="M12 1v16L3 9z"/></svg></button>
        <button aria-label="Next"><svg viewBox="0 0 16 18"><path d="M4 1v16l9-8z"/></svg></button>
        <button aria-label="Last"><svg viewBox="0 0 16 18"><path d="M14 1v16M2 1v16l9-8z"/></svg></button>
      </div>
      <button class="study-tab current">Model</button>
      <button class="study-tab">Motion Study 1</button>
    </div>

    <footer class="statusbar">
      <span>SolidWorks Student Edition - Academic Use Only</span>
      <span class="state">Under Defined</span>
      <span class="mode">Editing Assembly</span>
      <button class="units">MMGS <svg viewBox="0 0 10 7" width="10" height="7"><path d="M0 7h10L5 0z" fill="#55576a"/></svg></button>
      <button class="tips" aria-label="Quick tips">?</button>
      <button class="tag" aria-label="Tags"><svg viewBox="0 0 30 30" width="30" height="30"><path d="M3 16L15 2l8-1 6 6-1 9-12 13-6-1-7-7z" fill="#ffd83a" stroke="#a8780c" stroke-width="2"/><circle cx="22" cy="8" r="3" fill="#fff" stroke="#a8780c" stroke-width="2"/><path d="M9 16l6 6M12 13l6 6" stroke="#a8780c" stroke-width="2"/></svg></button>
    </footer>
  </div>
</body>
</html>
```
FILE: styles.css
```css
* {
  box-sizing: border-box;
}
body {
  margin: 0;
  font-family: "Noto Sans", "Open Sans", sans-serif;
  font-size: 20px;
  color: #3b3c58;
  overflow: hidden;
}
button {
  border: 0;
  padding: 0;
  background: none;
  font: inherit;
  color: inherit;
  display: block;
}
svg {
  display: block;
  flex: none;
}
.sprite {
  position: absolute;
  width: 0;
  height: 0;
}
.ico {
  width: 32px;
  height: 32px;
}
.caret {
  width: 12px;
  height: 8px;
}
.app {
  height: 100vh;
  display: flex;
  flex-direction: column;
}

/* title bar */
.titlebar {
  height: 58px;
  flex: none;
  display: flex;
  font-size: 21px;
  background: linear-gradient(#e3e4f2, #d3d5e6 50%, #b9bccb);
  border-bottom: 2px solid #6a6c7a;
}
.brand {
  width: 269px;
  display: flex;
  align-items: center;
  gap: 10px;
  padding: 2px 0 0 5px;
  border-right: 18px solid #7476a0;
  background: linear-gradient(#dfe1f0, #d0d2e2 50%, #cfd0dc);
  margin-bottom: -2px;
  border-bottom: 2px solid #22232c;
}
.brand-cube {
  width: 42px;
  height: 42px;
}
.cube-letter {
  font: bold 20px "Liberation Sans", sans-serif;
  fill: #fff;
}
.brand-name {
  font-size: 28px;
  font-style: italic;
  color: #1c1d26;
}
.menubar {
  display: flex;
  align-items: center;
  width: 725px;
  padding: 0 8px 0 0;
  background: linear-gradient(#dfe0f0, #bcbed2 50%, #c9cbd8);
  border-right: 2px solid #8a8c9c;
  margin-bottom: -2px;
  border-bottom: 2px solid #22232c;
}
.menubar button {
  padding: 3px 16px 0 15px;
}
.menubar .pin {
  padding: 0;
  margin-left: auto;
}
.quickbar {
  display: flex;
  align-items: center;
  gap: 14px;
  padding-left: 12px;
}
.select-tool {
  display: flex;
  align-items: center;
  height: 46px;
  width: 72px;
  margin: 0 -8px 0 -4px;
  border: 2px solid #74769a;
  border-radius: 8px;
  background: #d6d8ec;
}
.select-main {
  height: 42px;
  padding: 5px 4px;
  background: #b4b5d8;
  border-right: 2px solid #8c8eb0;
  border-radius: 6px 0 0 6px;
}
.select-more {
  padding: 0 7px;
}
.doc-title {
  flex: 1;
  text-align: center;
  align-self: center;
  padding-top: 2px;
}
.win-controls {
  display: flex;
  align-items: center;
  gap: 14px;
  padding-right: 4px;
}

/* ribbon */
.ribbon {
  height: 147px;
  flex: none;
  display: grid;
  grid-template-columns: 140px 130px 78px 122px 124px 127px 149px 113px 122px 92px 112px 112px 98px 121px 1fr;
  background: linear-gradient(#fdfdff, #f2f3fa 40%, #d5d7e4);
  border-bottom: 4px solid #666a7a;
}
.cmd {
  display: flex;
  flex-direction: column;
  align-items: center;
  padding: 27px 0 0;
  line-height: 26px;
  height: 143px;
}
.cmd span {
  margin-top: 2px;
  text-align: center;
}
.cmd.drop {
  padding-top: 13px;
}
.cmd.drop .caret {
  margin: auto 0 12px;
}
.cmd.off {
  color: #8d8e98;
}
.sep {
  border-left: 2px solid;
  border-image: linear-gradient(transparent, #c2c4d2 40%, #c2c4d2 70%, transparent) 1;
}
.active-wrap {
  padding: 3px 0 0 4px;
}
.cmd.active {
  width: 115px;
  height: 139px;
  padding-top: 22px;
  border: 2px solid #74769a;
  border-radius: 9px;
  background: #bebfe2;
}
.ds-mark {
  width: 140px;
  height: 140px;
  margin: 2px 8px 0 auto;
}

/* command tabs and heads-up toolbar */
.workspace {
  flex: 1;
  min-height: 0;
  display: flex;
  flex-direction: column;
  background: #c5c8d5;
}
.subbar {
  height: 42px;
  flex: none;
  display: flex;
  align-items: flex-start;
}
.cmd-tabs {
  display: flex;
  align-items: flex-start;
}
.cmd-tab {
  height: 38px;
  min-width: 113px;
  padding: 1px 15px 0;
  font: 24px "Liberation Sans", Arial, sans-serif;
  color: #55576a;
  background: #b9bbcc;
  border: solid #5a5c6e;
  border-width: 0 2px 3px 0;
}
.cmd-tab.current {
  margin-top: -4px;
  height: 46px;
  padding: 1px 14px 0;
  font-weight: bold;
  color: #2c2d38;
  background: linear-gradient(#d8dae6, #f3f3f9 70%);
  border-left: 2px solid #5a5c6e;
}
.hud {
  display: flex;
  align-items: center;
  gap: 14px;
  margin: 13px 0 0 245px;
}
.hud .more {
  margin: 0 2px 0 -7px;
}
.doc-controls {
  display: flex;
  gap: 14px;
  margin: 14px 16px 0 auto;
}

/* feature tree */
.main {
  flex: 1;
  min-height: 0;
  display: flex;
}
.sidebar {
  width: 380px;
  flex: none;
  display: flex;
  flex-direction: column;
  background: #e2e5ec;
  border-right: 4px solid #70727f;
}
.side-tabs {
  height: 59px;
  flex: none;
  display: flex;
  align-items: flex-end;
  gap: 4px;
  padding-right: 12px;
  border-bottom: 2px solid #80829a;
  background: linear-gradient(#d3d4e6 5px, #75778c 5px, #75778c 7px, #d3d4e6 7px);
}
.side-tab {
  width: 52px;
  height: 41px;
  padding: 4px 8px;
  border: 2px solid #80829a;
  border-bottom: 0;
  border-radius: 8px 8px 0 0;
  background: linear-gradient(#b6b8cc, #a9abbd);
}
.side-tab.current {
  height: 43px;
  margin-bottom: -2px;
  background: #e2e5ec;
}
.side-more {
  margin: 0 0 12px auto;
}
.filter {
  height: 34px;
  flex: none;
  margin: 4px 3px 0 2px;
  display: flex;
  align-items: center;
  gap: 6px;
  padding-left: 14px;
  border: 2px solid #8c8e9e;
  border-radius: 17px;
  background: linear-gradient(#dcdff0, #fff 70%);
}
.filter-ico {
  width: 24px;
  height: 24px;
}
.filter input {
  flex: 1;
  min-width: 0;
  height: 28px;
  border: 0;
  background: none;
  font: inherit;
}
.tree {
  margin: 6px 3px 0 0;
  padding-bottom: 4px;
  overflow: hidden;
  font-size: 22px;
  color: #24252e;
  border-bottom: 4px solid #2e52a4;
}
.row {
  height: 36px;
  display: flex;
  align-items: center;
  white-space: nowrap;
}
.row span {
  margin-left: 10px;
}
.root {
  padding-left: 4px;
}
.cap {
  width: 28px;
  height: 28px;
  margin-left: 8px;
}
.row .cap + span {
  margin-left: 8px;
}
.nodes {
  list-style: none;
  margin: 0;
  padding: 0 0 0 12px;
}
.nodes .row {
  position: relative;
}
.nodes .row::before {
  content: "";
  position: absolute;
  left: 8px;
  top: 0;
  height: 100%;
  border-left: 2px dotted #a2a4ae;
}
.nodes .row:last-child::before {
  height: 50%;
}
.twig {
  width: 20px;
  flex: none;
  margin-left: 10px;
  border-top: 2px dotted #a2a4ae;
}
.plus {
  position: relative;
  width: 18px;
  height: 18px;
  flex: none;
  margin-right: 12px;
  border: 2px solid #a2a4ae;
  background:
    linear-gradient(#444, #444) center / 10px 2px no-repeat,
    linear-gradient(#444, #444) center / 2px 10px no-repeat,
    #f6f6fa;
}
.plus::after {
  content: "";
  position: absolute;
  left: 16px;
  top: 6px;
  width: 11px;
  border-top: 2px dotted #a2a4ae;
}
.glyph-a {
  font: bold 24px "Liberation Serif", serif;
  fill: #2a2ac0;
  text-anchor: middle;
}
.hscroll {
  height: 38px;
  margin-top: auto;
  display: flex;
  align-items: flex-start;
  background: #f0f0f1;
  border-bottom: 5px solid #c9cad6;
}
.hscroll button {
  padding: 9px 8px 0 10px;
}
.track {
  flex: 1;
  padding-left: 9px;
}
.thumb {
  width: 182px;
  height: 30px;
  display: flex;
  justify-content: center;
  align-items: center;
  gap: 4px;
  border: 2px solid #9a9a9e;
  border-radius: 3px;
  background: linear-gradient(#f6f6f6, #e2e2e4 50%, #cfcfd3);
}
.thumb i {
  width: 2px;
  height: 12px;
  background: #55565a;
}

/* graphics area */
.viewport {
  flex: 1;
  min-width: 0;
  position: relative;
}
.scene {
  width: 100%;
  height: 100%;
  overflow: visible;
}
.axis {
  font-size: 22px;
}
.axis.x { fill: #d8201c; }
.axis.y { fill: #1c8a24; }
.axis.z { fill: #1c1cc0; }
.view-name {
  font-size: 24px;
  font-weight: bold;
  fill: #2a2560;
}
.splitter-handle {
  position: absolute;
  left: -3px;
  top: 562px;
  width: 17px;
  height: 57px;
  padding-left: 4px;
  border: 2px solid #74768a;
  border-left: 0;
  border-radius: 0 8px 8px 0;
  background: #d3d5e2;
}
.taskpane {
  position: absolute;
  right: 0;
  top: 80px;
  width: 42px;
  display: flex;
  flex-direction: column;
  gap: 2px;
}
.taskpane button {
  height: 46px;
  padding-left: 7px;
  border: 2px solid #85879a;
  border-right: 0;
  border-radius: 8px 0 0 8px;
  background: #b9bbca;
  overflow: hidden;
}
.taskpane .current {
  background: #eeeff6;
}

/* bottom bars, kept above the scene's overflow */
.study-bar {
  height: 32px;
  flex: none;
  position: relative;
  display: flex;
  align-items: flex-start;
  background: #e3e4eb;
  border-top: 2px solid #1d1e26;
  border-bottom: 2px solid #74767f;
}
.study-nav {
  display: flex;
  gap: 2px;
  width: 137px;
  height: 28px;
  padding: 1px 5px;
  background: #c9cad8;
}
.study-nav button {
  width: 31px;
  background: #a5a7b6;
  border: 1px solid #8a8c9a;
}
.study-nav svg {
  width: 16px;
  height: 18px;
  margin: auto;
  fill: #868897;
  stroke: #868897;
}
.study-tab {
  height: 27px;
  padding: 0 19px;
  min-width: 109px;
  font: 24px/22px "Liberation Sans", Arial, sans-serif;
  color: #2e2f3c;
  background: #b6b8c8;
  border: solid #5a5c6e;
  border-width: 0 2px 3px 2px;
}
.study-tab.current {
  font-weight: bold;
  background: #dadce8;
}
.study-tab + .study-tab {
  padding: 0 28px 0 16px;
  border-left: 0;
}
.statusbar {
  height: 36px;
  flex: none;
  position: relative;
  display: flex;
  align-items: center;
  padding: 2px 5px 0 4px;
  font-size: 23px;
  color: #23242e;
  background: linear-gradient(#d9daea, #c3c6d6 70%, #aec2d4);
}
.state {
  margin-left: auto;
}
.mode {
  margin-left: 34px;
}
.units {
  margin-left: 84px;
  display: flex;
  align-items: center;
  gap: 16px;
}
.tips {
  width: 26px;
  height: 27px;
  margin-left: 36px;
  font: bold 22px/22px "Liberation Sans", Arial, sans-serif;
  color: #14941c;
  background: #fff;
  border: 2px solid #2a5a7c;
}
.tag {
  margin-left: 103px;
}
```
